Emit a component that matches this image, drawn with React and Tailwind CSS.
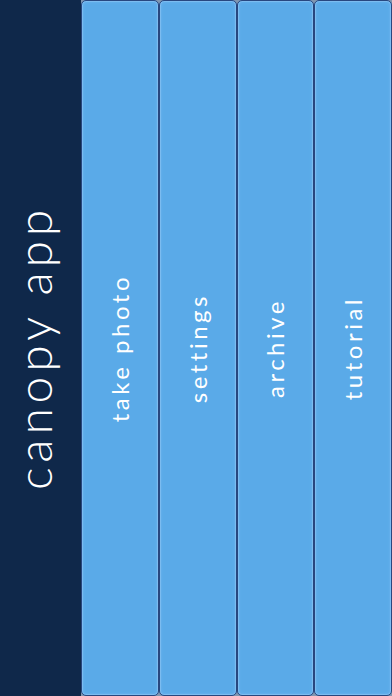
const BUTTONS = ['take photo', 'settings', 'archive', 'tutorial'];

function MenuButton({ label }) {
  return (
    <button className="flex h-full flex-1 items-center justify-center rounded-[5px] border-[1.5px] border-[#28477f] bg-[#5aaae8] shadow-[inset_0_0_0_1px_#7cbcf0,inset_0_0_3px_1px_#6fb5ee]">
      <span className="rotate-180 text-[24px] font-normal tracking-[3.5px] text-white [writing-mode:vertical-rl]">
        {label}
      </span>
    </button>
  );
}

export default function App() {
  return (
    <div
      className="flex h-[696px] w-[392px] overflow-hidden bg-[#8196b0]"
      style={{ fontFamily: 'Lato, "Open Sans", sans-serif' }}
    >
      <div className="flex h-full w-[81px] shrink-0 items-center justify-center bg-[#0f284a] pr-[14px]">
        <span className="rotate-180 text-[48px] font-light tracking-[4.8px] text-white [writing-mode:vertical-rl]">
          canopy app
        </span>
      </div>
      <div className="flex h-full flex-1">
        {BUTTONS.map(b => <MenuButton key={b} label={b} />)}
      </div>
    </div>
  );
}
